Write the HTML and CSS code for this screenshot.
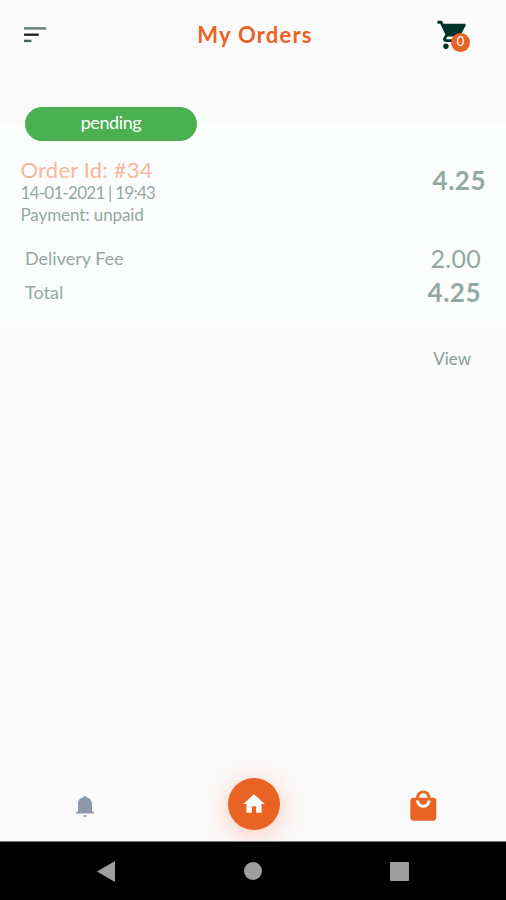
FILE: index.html
```
<!DOCTYPE html>
<html lang="en">
<head>
<meta charset="utf-8">
<title>My Orders</title>
<link rel="stylesheet" href="styles.css">
</head>
<body>
<div class="screen">
  <header class="bar">
    <svg class="menu" viewBox="0 0 24 18"><path d="M0 1.2h22.2v2.4H0z" fill="#657e78"/><path d="M0 7.6h14.8v2.2H0z" fill="#101c19"/><path d="M0 13.7h7.4v2.4H0z" fill="#4b625c"/></svg>
    <h1 class="title">My Orders</h1>
    <div class="cart">
      <svg class="cart-icon" viewBox="0 0 24 24"><path fill="#01352b" d="M7 18c-1.1 0-1.99.9-1.99 2S5.9 22 7 22s2-.9 2-2-.9-2-2-2zM1 2v2h2l3.6 7.59-1.35 2.45c-.16.28-.25.61-.25.96 0 1.1.9 2 2 2h12v-2H7.42c-.14 0-.25-.11-.25-.25l.03-.12.9-1.63h7.45c.75 0 1.41-.41 1.75-1.03l3.58-6.49c.08-.14.12-.31.12-.48 0-.55-.45-1-1-1H5.21l-.94-2H1z"/></svg>
      <span class="badge">0</span>
    </div>
  </header>
  <main class="orders">
    <div class="status"><span class="t-status">pending</span></div>
    <section class="card">
      <div class="summary">
        <div class="info">
          <span class="order-id">Order Id: #34</span>
          <span class="date">14-01-2021 | 19:43</span>
          <span class="payment">Payment: unpaid</span>
        </div>
        <span class="price">4.25</span>
      </div>
      <div class="line"><span class="fee">Delivery Fee</span><span class="amount">2.00</span></div>
      <div class="line total"><span class="total-label">Total</span><span class="price">4.25</span></div>
    </section>
    <div class="actions"><span class="view">View</span></div>
  </main>
  <nav class="tabs">
    <div class="tab"><svg class="bell" viewBox="0 0 18 22"><path fill="#8b99ab" d="M9 0c1 0 1.700.7 1.700 1.600 3.300.5 5.300 3 5.300 6.200v7.200l2 1.500v1H0v-1L2 15V7.800c0-3.200 2-5.700 5.300-6.200C7.300.7 8 0 9 0zM7.200 19.300h3.600c0 1.300-.8 2-1.800 2s-1.800-.7-1.800-2z"/></svg></div>
    <div class="tab"><div class="home"><svg viewBox="0 0 24 24"><path fill="#fff" d="M10 20v-6h4v6h5v-8h3L12 3 2 12h3v8z"/></svg></div></div>
    <div class="tab"><svg class="bag" viewBox="0 0 24 24"><path fill="#e96325" d="M19 6h-2c0-2.76-2.24-5-5-5S7 3.24 7 6H5c-1.1 0-1.99.9-1.99 2L3 20c0 1.1.9 2 2 2h14c1.1 0 2-.9 2-2V8c0-1.1-.9-2-2-2zm-7-3c1.66 0 3 1.34 3 3H9c0-1.66 1.34-3 3-3zm0 10c-2.76 0-5-2.24-5-5h2c0 1.66 1.34 3 3 3s3-1.34 3-3h2c0 2.76-2.24 5-5 5z"/></svg></div>
  </nav>
  <footer class="system">
    <svg viewBox="0 0 18 21"><path fill="#9e9e9e" d="M18 0v21L0 10.500z"/></svg>
    <svg class="circle" viewBox="0 0 18 18"><circle fill="#9e9e9e" cx="9" cy="9" r="9"/></svg>
    <svg class="square" viewBox="0 0 19 19"><rect fill="#9e9e9e" width="19" height="19" rx="1"/></svg>
  </footer>
</div>
</body>
</html>
```
FILE: styles.css
```
* { box-sizing: border-box; }
body { margin: 0; font-family: Lato, "Liberation Sans", sans-serif; background: #fafafa; }
svg { display: block; }
span { white-space: nowrap; }
.screen { width: 506px; height: 900px; display: flex; flex-direction: column; background: #fafafa; overflow: hidden; }

.bar { height: 70px; flex: none; display: flex; justify-content: space-between; align-items: center; padding: 0 36px 0 24px; }
.menu { width: 24px; height: 18px; margin-right: 26px; }
.title { margin: 0; font-size: 22px; line-height: 28px; font-weight: 700; letter-spacing: 1.200px; color: #e96325; }
.cart { position: relative; width: 34px; height: 34px; }
.cart-icon { width: 34px; height: 34px; }
.badge { position: absolute; left: 15px; top: 15px; width: 19px; height: 19px; border-radius: 50%; background: #e96325; color: #fff; font-size: 13px; line-height: 16px; text-align: center; }

.orders { flex: 1; display: flex; flex-direction: column; padding-top: 37px; background: linear-gradient(#fafafa 54px, #fbfcfc 54px, #fbfcfc 257px, #fafafa 257px); }
.status { width: 172px; height: 34px; margin-left: 25px; border-radius: 17px; background: #4bb050; color: #fff; display: flex; align-items: center; justify-content: center; font-size: 18px; letter-spacing: -0.400px; line-height: 30px; padding-bottom: 4px; }
.card { height: 187px; padding: 16px 25px 0 20.500px; color: #93a9a2; }
.summary { display: flex; justify-content: space-between; height: 84px; }
.info { display: flex; flex-direction: column; }
.order-id { font-size: 22px; line-height: 25px; letter-spacing: 0.200px; color: #f7b89b; }
.date { font-size: 17px; line-height: 22px; letter-spacing: -0.750px; }
.payment { font-size: 17px; line-height: 21px; letter-spacing: -0.080px; }
.price { font-size: 26px; line-height: 30px; font-weight: 700; letter-spacing: 0.500px; }
.summary .price { margin: 8px -5px 0 0; }
.line { display: flex; justify-content: space-between; align-items: center; height: 34px; padding-left: 4.500px; font-size: 18px; }
.amount { font-size: 25px; line-height: 30px; letter-spacing: 0.300px; }
.actions { display: flex; justify-content: flex-end; padding: 19px 35px 0 0; color: #8b9c97; font-size: 17px; line-height: 24px; }

.tabs { height: 76px; flex: none; display: grid; grid-template-columns: repeat(3, 1fr); padding-top: 2px; margin-right: -1px; }
.tab { display: flex; justify-content: center; align-items: center; }
.bell { width: 18px; height: 22px; margin-top: 6px; }
.home { width: 52px; height: 52px; border-radius: 50%; background: #e96325; display: flex; align-items: center; justify-content: center; box-shadow: 0 5px 26px rgba(255, 112, 50, .34); }
.home svg { width: 26px; height: 26px; }
.bag { width: 34.600px; height: 34.600px; margin: 4px 0 0 2px; }

.system { position: relative; height: 59px; flex: none; display: flex; justify-content: space-between; align-items: center; padding: 0 97px; border-top: 1px solid #777; background: #000; }
.system svg { width: 18px; height: 21px; }
.system .circle { height: 18px; margin-left: 1px; }
.system .square { width: 19px; height: 19px; }
```
